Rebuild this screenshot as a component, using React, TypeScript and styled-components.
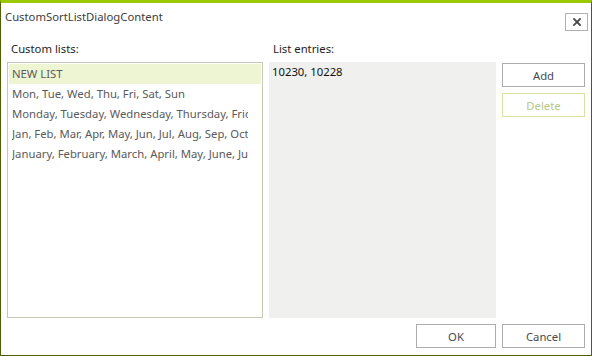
import styled, { createGlobalStyle } from "styled-components";

const GlobalStyle = createGlobalStyle`
  html, body {
    margin: 0;
    padding: 0;
    background: #ffffff;
  }
  * {
    box-sizing: border-box;
  }
`;

const customLists = [
  "NEW LIST",
  "Mon, Tue, Wed, Thu, Fri, Sat, Sun",
  "Monday, Tuesday, Wednesday, Thursday, Friday, Saturday, Sunday",
  "Jan, Feb, Mar, Apr, May, Jun, Jul, Aug, Sep, Oct, Nov, Dec",
  "January, February, March, April, May, June, July, August, September, October, November, December",
];

const App = () => {
  return (
    <>
      <GlobalStyle />
      <Window>
        <TitleBar>
          <Title>CustomSortListDialogContent</Title>
          <CloseButton aria-label="Close">
            <svg width="8" height="8" viewBox="0 0 8 8">
              <path
                d="M1 1 L7 7 M7 1 L1 7"
                stroke="#4a4a4a"
                strokeWidth="1.8"
                strokeLinecap="square"
              />
            </svg>
          </CloseButton>
        </TitleBar>
        <Body>
          <Column $width={256}>
            <Label>Custom lists:</Label>
            <ListBox>
              {customLists.map((item, i) => (
                <ListItem key={item} $selected={i === 0}>
                  <ItemText>{item}</ItemText>
                </ListItem>
              ))}
            </ListBox>
          </Column>
          <Column $width={227}>
            <Label>List entries:</Label>
            <EntriesBox>10230, 10228</EntriesBox>
          </Column>
          <SideButtons>
            <Button>Add</Button>
            <Button $disabled>Delete</Button>
          </SideButtons>
        </Body>
        <Footer>
          <Button $width={80}>OK</Button>
          <Button>Cancel</Button>
        </Footer>
      </Window>
    </>
  );
};

const Window = styled.div`
  width: 592px;
  height: 356px;
  display: flex;
  flex-direction: column;
  background: #fff;
  border: 1px solid #4e6100;
  border-top: 3px solid #9bc800;
  font-family: "Noto Sans", "Open Sans", sans-serif;
  font-size: 11.3px;
`;

const TitleBar = styled.div`
  display: flex;
  justify-content: space-between;
  align-items: flex-start;
  height: 33px;
  padding: 6px 3px 0 4px;
`;

const Title = styled.div`
  color: #3d3d3d;
  line-height: 16px;
`;

const CloseButton = styled.button`
  width: 23px;
  height: 18px;
  margin-top: 4px;
  padding: 0;
  display: flex;
  align-items: center;
  justify-content: center;
  background: #fff;
  border: 1px solid #b0b0b0;
`;

const Body = styled.div`
  display: flex;
  gap: 6px;
  padding: 0 6px 0 6px;
  height: 282px;
`;

const Column = styled.div<{ $width: number }>`
  width: ${(p) => p.$width}px;
  display: flex;
  flex-direction: column;
`;

const Label = styled.div`
  color: #1e1e1e;
  line-height: 16px;
  height: 26px;
  padding: 5px 0 0 4px;
`;

const ListBox = styled.div`
  height: 256px;
  border: 1px solid #c6c8b4;
  padding: 1px;
  overflow: hidden;
`;

const ListItem = styled.div<{ $selected?: boolean }>`
  height: 20px;
  line-height: 20px;
  padding-left: 3px;
  color: #5a5a5a;
  background: ${(p) => (p.$selected ? "#eef5d3" : "transparent")};
`;

const ItemText = styled.div`
  width: 236px;
  white-space: nowrap;
  overflow: hidden;
`;

const EntriesBox = styled.div`
  height: 256px;
  background: #f0f1ee;
  color: #111;
  padding: 2px 3px;
  line-height: 16px;
`;

const SideButtons = styled.div`
  display: flex;
  flex-direction: column;
  gap: 6px;
  padding-top: 27px;
`;

const Button = styled.button<{ $disabled?: boolean; $width?: number }>`
  width: ${(p) => p.$width ?? 83}px;
  height: 24px;
  padding: 0;
  background: #fff;
  font-family: inherit;
  font-size: 11.3px;
  color: ${(p) => (p.$disabled ? "#b5c88a" : "#4a4a4a")};
  border: 1px solid ${(p) => (p.$disabled ? "#d6e3a6" : "#acacac")};
`;

const Footer = styled.div`
  display: flex;
  justify-content: flex-end;
  gap: 6px;
  padding: 6px 6px 0 0;
`;

export default App;
